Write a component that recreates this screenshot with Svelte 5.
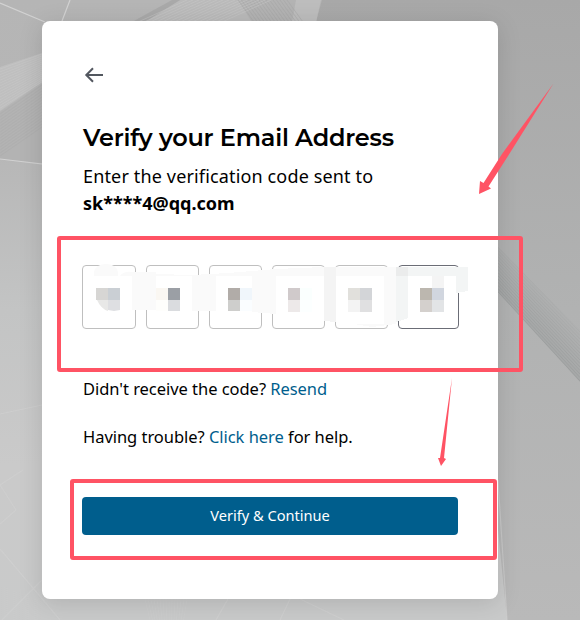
<script>
  const boxes = [54, 53, 53, 53, 53, 61];
  // Fine parallel strands of the decorative backdrop
  const strands = Array.from({ length: 15 }, (_, i) => i);
  const tiles = [
    [96, 288, '#d7d6d4'], [108, 288, '#cacfd4'],
    [168, 288, '#9b9fa5'], [156, 288, '#faf7f2'], [168, 300, '#dadcdf'], [156, 300, '#fefefc'],
    [228, 288, '#b1aca8'], [240, 288, '#f0f6fb'], [228, 300, '#cececc'], [240, 300, '#fafdff'],
    [288, 288, '#d0cacb'], [300, 288, '#fafffe'], [288, 300, '#ede9e9'], [300, 300, '#fcffff'],
    [348, 288, '#e1e0dc'], [360, 288, '#d3d5d8'], [348, 300, '#f3f3f3'], [360, 300, '#e0e0e1'],
    [420, 288, '#bcb7af'], [432, 288, '#d1d6df'], [420, 300, '#d4d0cd'], [432, 300, '#e2e4e6']
  ];
</script>

<main>
  <svg class="backdrop" viewBox="0 0 580 620" aria-hidden="true">
    <defs>
      <linearGradient id="left" x1="0" y1="0" x2="0" y2="1">
        <stop offset="0" stop-color="#b5b5b5" /><stop offset=".25" stop-color="#b7b7b7" />
        <stop offset=".5" stop-color="#c3c4c4" /><stop offset=".75" stop-color="#cacaca" />
        <stop offset="1" stop-color="#c9caca" />
      </linearGradient>
      <linearGradient id="right" x1="0" y1="0" x2="0" y2="1">
        <stop offset="0" stop-color="#a8a8a8" /><stop offset=".5" stop-color="#b1b2b2" />
        <stop offset="1" stop-color="#b9b9b9" />
      </linearGradient>
      <linearGradient id="band" gradientUnits="userSpaceOnUse" x1="555" y1="295" x2="525" y2="322">
        <stop offset="0" stop-color="#a4a6a6" stop-opacity="0" /><stop offset="1" stop-color="#a4a6a6" stop-opacity=".9" />
      </linearGradient>
    </defs>
    <rect width="580" height="620" fill="url(#left)" />
    <path d="M320 0H580V620H507L480 350 316 22Z" fill="url(#right)" />
    <path d="M132 22L181 0H238L252 22Z" fill="#bababa" />
    <path d="M132 22L145 22 180 0H172Z" fill="#a9a9a9" />
    <path d="M238 0H322L316 22H252Z" fill="#b3b3b3" />
    <path d="M296 0H321L316 22H292Z" fill="#bdbdbd" />
    <path d="M0 67L42 53V82L0 111Z" fill="#bfbfbf" />
    <path d="M0 112L42 84V163L0 159Z" fill="#b3b3b3" />
    <path d="M498 247L580 330V382L498 292Z" fill="url(#band)" />
    <g fill="none" stroke="#d2d2d2" stroke-width="1.2">
      <path d="M0 3L45 22M70 0L62 21M0 159L42 164" />
      <path d="M0 485L23 470M0 485L16 510 0 524M0 549L60 620M2 620L42 580M0 414L42 405" opacity=".55" />
      <path d="M216 620L228 599M280 620L290 599" opacity=".7" />
      <path d="M498 480L507 620M300 599L344 620" opacity=".6" />
    </g>
    {#each strands as i}
      <path d={`M0 ${69 + i * 2.8}L42 ${54 + i * 2}`} stroke="#cbcbcb" stroke-width=".7" opacity=".6" />
      <path d={`M0 ${114 + i * 3}L42 ${85 + i * 3}`} stroke="#a9a9a9" stroke-width=".7" opacity=".55" />
      <path d={`M${138 + i * 6} 22L${187 + i * 6} 0`} stroke="#cbcbcb" stroke-width=".8" opacity=".55" />
      <path d={`M${238 + i * 3.5} 0L${254 + i * 3.5} 22`} stroke="#a4a4a4" stroke-width=".8" opacity=".6" />
      <path d={`M498 ${247 + i * 3.2}L580 ${332 + i * 3.5}`} stroke="#999c9c" stroke-width="1" opacity={0.15 + i * 0.035} />
      <path d={`M${145 + i * 3} 599L${150 + i * 2.4} 620`} stroke="#d3d3d3" stroke-width=".6" opacity=".45" />
      <path d={`M0 ${586 + i * 2}L42 ${602 + i * 2}`} stroke="#d0d0d0" stroke-width=".5" opacity=".4" />
    {/each}
  </svg>

  <section class="card">
    <button class="back" aria-label="Back">
      <svg width="20" height="18" viewBox="0 0 20 18" fill="none" stroke="#52575f" stroke-width="2">
        <path d="M19 9H2.5M9 2.3L2.3 9 9 15.7" />
      </svg>
    </button>
    <h1>Verify your Email Address</h1>
    <p class="intro">Enter the verification code sent to</p>
    <p class="email">sk****4@qq.com</p>
    <div class="codes">
      {#each boxes as width, i}
        <span class="code" class:active={i === 5} style:width={`${width}px`}></span>
      {/each}
    </div>
    <p class="resend">Didn't receive the code? <a href="#resend">Resend</a></p>
    <p class="trouble">Having trouble? <a href="#help">Click here</a> for help.</p>
    <button class="submit"><span>Verify &amp; Continue</span></button>
  </section>

  <svg class="marks" viewBox="0 0 580 620" aria-hidden="true">
    <g shape-rendering="crispEdges">
      <path d="M132 272H156V310H132ZM192 275H216V311H192ZM252 271L276 269V314L252 312Z" fill="#fafafa" />
      <path d="M156 274L192 275 228 273 276 269 324 267H336V276H156Z" fill="#fafafa" />
      <path d="M324 267H336V322L324 321Z" fill="#f4f4f4" />
      <path d="M336 276H384V324H336Z" fill="#fff" />
      <path d="M336 267H396V324L372 327 354 324 384 324V276H336Z" fill="#fafafa" />
      <path d="M396 267H468V291L456 293V276H444V288H432V276H408V318L396 322Z" fill="#f3f5f5" />
      <path d="M396 267H408V276H396Z" fill="#ebecec" />
      <path d="M432 276H444V288H432Z" fill="#f4f4f4" />
    </g>
    <path d="M94 276V272Q96 264 106 264T118 272V276ZM120 276Q124 271 132 272V276Z" fill="#fafafa" />
    {#each tiles as [x, y, color]}
      <rect {x} {y} width="12" height={y === 300 && x < 250 ? 11 : 12} fill={color} shape-rendering="crispEdges" />
    {/each}
    <path d="M97 300H108V311Q101 309 97 300Z" fill="#e8e8e7" />
    <path d="M108 300H120V310L114 311 108 310Z" fill="#dedfe2" />
    <g fill="none" stroke="#ff5364" stroke-width="4" stroke-linejoin="round">
      <rect x="59" y="238" width="462" height="132" rx="1" />
      <rect x="72" y="481" width="423" height="77" rx="1" />
    </g>
    <g fill="#ff5364">
      <path d="M553.5 83.5L508 156 488.5 186.5 491 188.5 479 194 480 181 483.5 183 502 154Z" />
      <path d="M452 378L444 458 446 459 441 466 438 458 440 458Z" />
    </g>
  </svg>
</main>

<style>
  :global(body) { margin: 0; }
  main { position: relative; box-sizing: border-box; width: 580px; height: 620px; padding: 21px 0 0 42px; overflow: hidden; background: #bbb; font-family: "Segoe UI", "Noto Sans", sans-serif; color: #000; }
  .backdrop, .marks { position: absolute; top: 0; left: 0; width: 580px; height: 620px; pointer-events: none; }
  .card { position: relative; box-sizing: border-box; width: 456px; height: 578px; padding: 45px 40px 0; border-radius: 8px; background: #fff; box-shadow: 0 4px 24px rgba(0, 0, 0, .13); display: flex; flex-direction: column; align-items: flex-start; }
  .back { display: flex; padding: 0; margin-left: 2px; border: 0; background: none; }
  h1 { margin: 37px 0 0 1px; font: 600 24px/34px Montserrat, Inter, sans-serif; white-space: nowrap; letter-spacing: -.21px; }
  p { margin: 0; white-space: nowrap; }
  .intro { margin: 7px 0 0 1px; font-size: 18px; line-height: 28px; letter-spacing: .15px; }
  .email { margin-left: 1px; font-size: 18px; line-height: 26px; font-weight: 700; }
  .codes { display: flex; gap: 10px; margin-top: 49px; height: 64px; }
  .code { box-sizing: border-box; flex: none; border: 1px solid #bfbfbf; border-radius: 4px; }
  .active { border-color: #6b6d76; }
  .resend, .trouble { margin-left: 1px; font-size: 16.5px; line-height: 24px; letter-spacing: -.04px; }
  .resend { margin-top: 48px; }
  .trouble { margin-top: 24px; }
  a { color: #005e8d; text-decoration: none; }
  .submit { width: 376px; height: 38px; margin-top: 48px; padding: 0 0 2px; border: 0; border-radius: 4px; background: #005e8d; color: #fff; font: 14.6px/36px "Segoe UI", "Noto Sans", sans-serif; }
</style>
